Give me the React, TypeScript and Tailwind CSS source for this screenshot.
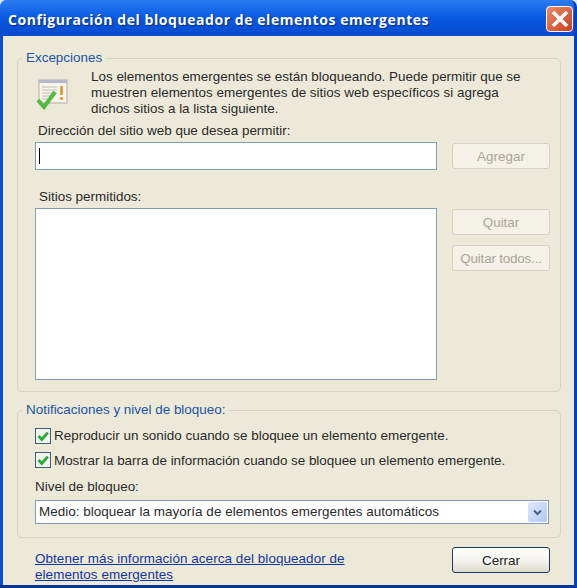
const font = "font-['Liberation_Sans',Arial,sans-serif]";

function Btn({ label, active = false, className = "" }: { label: string; active?: boolean; className?: string }) {
  return (
    <div
      className={
        "w-[98px] h-[26px] flex items-center justify-center rounded-[3px] border pt-[2px] text-[13.45px] whitespace-nowrap " +
        (active
          ? "border-[#1c3a5e] text-[#222] bg-gradient-to-b from-[#ffffff] via-[#f6f5f0] to-[#dedacd] "
          : "border-[#d4d1c2] text-[#a9a799] bg-[#f3f1e8] ") +
        className
      }
    >
      {label}
    </div>
  );
}

function Group({ title, className, children }: { title: string; className: string; children: React.ReactNode }) {
  return (
    <div className={"relative ml-[14px] mr-[13px] border border-[#d6d3c3] rounded-[5px] " + className}>
      <div className="absolute left-[4px] top-[-9px] bg-[#ece9d8] px-[4px] text-[13.45px] leading-[16px] text-[#2153a8]">
        {title}
      </div>
      {children}
    </div>
  );
}

function Check({ label, className = "" }: { label: string; className?: string }) {
  return (
    <div className="flex items-center h-[16px]">
      <div className="w-[16px] h-[16px] border border-[#3f5d72] bg-[#f4f4ec] flex items-center justify-center">
        <svg width="12" height="12" viewBox="0 0 12 12">
          <path d="M1.5 6 L4.8 9.4 L10.8 2.6" fill="none" stroke="#22a83a" strokeWidth="2.8" />
        </svg>
      </div>
      <span className={"ml-[3px] text-[#2a2a2a] whitespace-nowrap " + className}>{label}</span>
    </div>
  );
}

export default function App() {
  return (
    <div className={"w-[577px] h-[588px] overflow-hidden bg-[#dfe6f0] " + font}>
      <div className="w-full h-full flex flex-col rounded-t-[7px] overflow-hidden bg-[#0a4ed6] border-r-[3px] border-b-[3px] border-r-[#0b3fb8] border-b-[#0a3398]">
        <div className="h-[36px] shrink-0 flex items-center pt-[2px] pl-[8px] pr-[1px] justify-between bg-gradient-to-b from-[#2a7df2] via-[#0558e0] to-[#0a4ccc]">
          <span className="font-['Open_Sans',sans-serif] font-bold text-[14px] tracking-[0.56px] text-white whitespace-nowrap [text-shadow:1px_1px_1px_#0a2a80]">
            Configuración del bloqueador de elementos emergentes
          </span>
          <div className="w-[27px] h-[26px] rounded-[4px] border border-white bg-gradient-to-br from-[#ec8a68] to-[#c83c18] flex items-center justify-center">
            <svg width="20" height="20" viewBox="0 0 20 20">
              <path d="M3 3 L17 17 M17 3 L3 17" stroke="#fff" strokeWidth="3.6" fill="none" />
            </svg>
          </div>
        </div>
        <div className="ml-[3px] flex-1 bg-[#ece9d8] pt-[22px] text-[#2a2a2a] text-[13.45px]">
          <Group title="Excepciones" className="h-[334px] pl-[17px] pr-[10px]">
            <div className="flex pt-[10px]">
              <div className="w-[56px] shrink-0 pt-[9px] pl-[1px]">
                <svg width="32" height="32" viewBox="0 0 32 32">
                  <rect x="3" y="2" width="28" height="23" fill="#f7f5ea" stroke="#b0afa4" />
                  <rect x="3" y="2" width="28" height="3" fill="#b5b9c6" />
                  <path d="M6 9h15M6 12h15M6 15h15M6 18h10M6 21h7" stroke="#c0bfb6" strokeWidth="1.2" />
                  <path d="M25.5 8v9M25.5 19v3" stroke="#e8902a" strokeWidth="2.6" />
                  <path d="M2 22 L8 29 L19 14" fill="none" stroke="#52bb45" strokeWidth="4" />
                </svg>
              </div>
              <p className="leading-[16px] w-[440px]">
                Los elementos emergentes se están bloqueando. Puede permitir que se muestren elementos emergentes de sitios web específicos si agrega dichos sitios a la lista siguiente.
              </p>
            </div>
            <div className="mt-[6px] pl-[3px] leading-[16px]">Dirección del sitio web que desea permitir:</div>
            <div className="mt-[3px] flex items-start gap-[15px]">
              <div className="w-[402px] h-[28px] border border-[#7f9db9] bg-white flex items-center pl-[3px]">
                <div className="w-px h-[16px] bg-black" />
              </div>
              <Btn label="Agregar" className="mt-[1px]" />
            </div>
            <div className="mt-[19px] leading-[16px] pl-[4px]">Sitios permitidos:</div>
            <div className="mt-[3px] flex items-start gap-[15px]">
              <div className="w-[402px] h-[172px] border border-[#7f9db9] bg-white" />
              <div className="mt-[1px] flex flex-col gap-[10px]">
                <Btn label="Quitar" />
                <Btn label="Quitar todos..." className="tracking-[-0.2px]" />
              </div>
            </div>
          </Group>
          <Group title="Notificaciones y nivel de bloqueo:" className="mt-[18px] h-[128px] pl-[17px] pr-[11px]">
            <div className="pt-[17px] flex flex-col gap-[8px]">
              <Check label="Reproducir un sonido cuando se bloquee un elemento emergente." />
              <Check label="Mostrar la barra de información cuando se bloquee un elemento emergente." className="tracking-[-0.03px] pt-[2px]" />
            </div>
            <div className="mt-[11px] leading-[16px]">Nivel de bloqueo:</div>
            <div className="mt-[5px] w-[514px] h-[24px] border border-[#7f9db9] bg-white flex items-center justify-between pl-[3px] pr-px">
              <span className="tracking-[0.03px]">Medio: bloquear la mayoría de elementos emergentes automáticos</span>
              <div className="w-[19px] h-[20px] rounded-[2px] bg-gradient-to-br from-[#dfe8fb] to-[#b3c8f3] flex items-center justify-center">
                <svg width="9" height="7" viewBox="0 0 9 7">
                  <path d="M1 1.5 L4.5 5 L8 1.5" fill="none" stroke="#4d6185" strokeWidth="2" />
                </svg>
              </div>
            </div>
          </Group>
          <div className="mt-[9px] ml-[32px] mr-[24px] flex items-start justify-between">
            <a className="w-[330px] mt-[4px] text-[#10379f] underline leading-[16px] tracking-[0.07px]">
              Obtener más información acerca del bloqueador de elementos emergentes
            </a>
            <Btn label="Cerrar" active />
          </div>
        </div>
      </div>
    </div>
  );
}
